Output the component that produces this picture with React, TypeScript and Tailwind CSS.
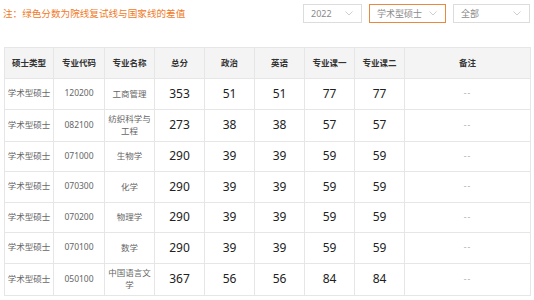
import React from "react";

const rows = [
  { type: "学术型硕士", code: "120200", name: "工商管理", total: "353", zz: "51", yy: "51", k1: "77", k2: "77" },
  { type: "学术型硕士", code: "082100", name: "纺织科学与工程", total: "273", zz: "38", yy: "38", k1: "57", k2: "57" },
  { type: "学术型硕士", code: "071000", name: "生物学", total: "290", zz: "39", yy: "39", k1: "59", k2: "59" },
  { type: "学术型硕士", code: "070300", name: "化学", total: "290", zz: "39", yy: "39", k1: "59", k2: "59" },
  { type: "学术型硕士", code: "070200", name: "物理学", total: "290", zz: "39", yy: "39", k1: "59", k2: "59" },
  { type: "学术型硕士", code: "070100", name: "数学", total: "290", zz: "39", yy: "39", k1: "59", k2: "59" },
  { type: "学术型硕士", code: "050100", name: "中国语言文学", total: "367", zz: "56", yy: "56", k1: "84", k2: "84" },
];

const headers = ["硕士类型", "专业代码", "专业名称", "总分", "政治", "英语", "专业课一", "专业课二", "备注"];
const widths = ["w-[49px]", "w-[51px]", "w-[50px]", "w-[50px]", "w-[50px]", "w-[50px]", "w-[50px]", "w-[50px]", "w-[126px]"];

function Chevron() {
  return (
    <svg width="8" height="5" viewBox="0 0 8 5" className="shrink-0">
      <polyline points="0.5,0.5 4,4 7.5,0.5" fill="none" stroke="#c8c8c8" strokeWidth="0.9" />
    </svg>
  );
}

function Select({ label, w, active }: { label: string; w: string; active?: boolean }) {
  return (
    <div
      className={`${w} h-[19px] flex items-center justify-between pl-[7px] pr-[8px] border ${
        active ? "border-[#e9883f]" : "border-[#dcdcdc]"
      } bg-white`}
    >
      <span className="text-[9px] text-[#8a8a8a] leading-none">{label}</span>
      <Chevron />
    </div>
  );
}

export default function App() {
  return (
    <div
      className="w-[534px] h-[300px] bg-white overflow-hidden"
      style={{ fontFamily: '"Noto Sans", "Noto Sans CJK SC", sans-serif' }}
    >
      <div className="h-[27px] flex items-center justify-between pl-[3px] pr-[4px]">
        <span className="text-[9.6px] text-[#f07a28] leading-none">注：绿色分数为院线复试线与国家线的差值</span>
        <div className="flex items-center gap-[7px]">
          <Select label="2022" w="w-[59px]" />
          <Select label="学术型硕士" w="w-[77px]" active />
          <Select label="全部" w="w-[77px]" />
        </div>
      </div>
      <div className="pl-[4px] mt-[20px]">
        <table className="border-collapse table-fixed w-[526px]">
          <thead>
            <tr className="h-[31px] bg-[#f4f4f4]">
              {headers.map((h, i) => (
                <th
                  key={h}
                  className={`${widths[i]} border border-[#e6e6e6] p-0 text-[8.5px] font-semibold text-[#333] text-center align-middle`}
                >
                  {h}
                </th>
              ))}
            </tr>
          </thead>
          <tbody>
            {rows.map((r) => (
              <tr key={r.code} className={r.name.length > 5 ? "h-[32px]" : "h-[30.5px]"}>
                <td className="border border-[#e6e6e6] p-0 text-center text-[8.5px] text-[#666]">{r.type}</td>
                <td className="border border-[#e6e6e6] p-0 text-center text-[8.5px] text-[#666]">{r.code}</td>
                <td className="border border-[#e6e6e6] p-0 text-center text-[8.5px] text-[#666]">
                  <div className="max-w-[44px] mx-auto leading-[12.5px]">{r.name}</div>
                </td>
                <td className="border border-[#e6e6e6] p-0 text-center text-[12px] text-[#222]">{r.total}</td>
                <td className="border border-[#e6e6e6] p-0 text-center text-[12px] text-[#222]">{r.zz}</td>
                <td className="border border-[#e6e6e6] p-0 text-center text-[12px] text-[#222]">{r.yy}</td>
                <td className="border border-[#e6e6e6] p-0 text-center text-[12px] text-[#222]">{r.k1}</td>
                <td className="border border-[#e6e6e6] p-0 text-center text-[12px] text-[#222]">{r.k2}</td>
                <td className="border border-[#e6e6e6] p-0 text-center text-[8.5px] tracking-[1px] text-[#aaa]">--</td>
              </tr>
            ))}
          </tbody>
        </table>
      </div>
    </div>
  );
}
